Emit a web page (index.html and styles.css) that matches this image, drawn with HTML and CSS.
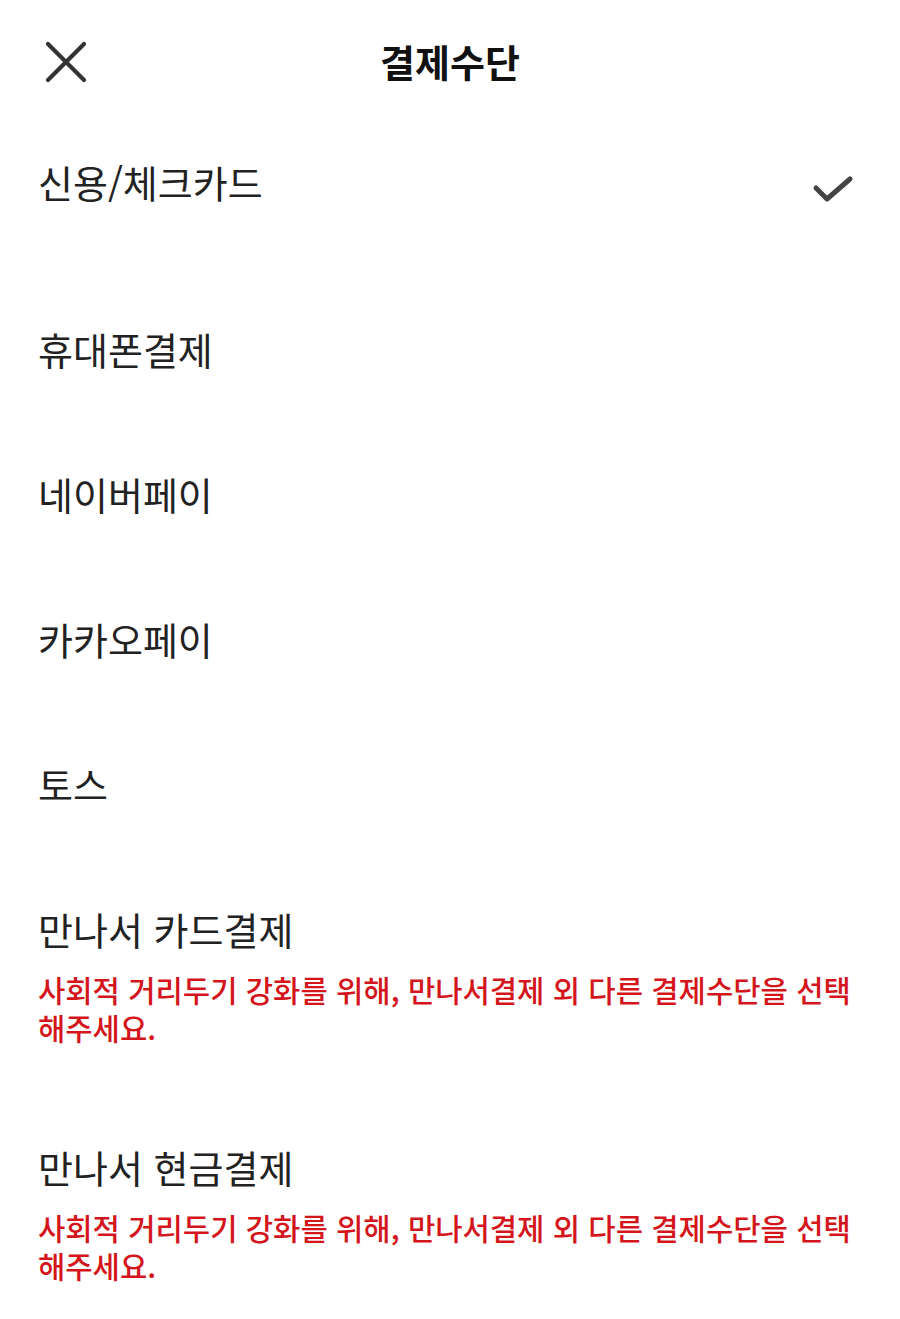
FILE: index.html
```html
<!DOCTYPE html>
<html lang="ko">
<head>
  <meta charset="UTF-8" />
  <meta name="viewport" content="width=device-width, initial-scale=1.0">
  <title>결제수단</title>
  <link rel="stylesheet" href="styles.css">
</head>
<body>
  <div class="sheet">
    <div class="header">
      <button class="close-btn" aria-label="닫기">
        <svg width="42" height="42" viewBox="0 0 42 42">
          <path d="M3 3 L39 39 M39 3 L3 39" stroke="#333" stroke-width="4.2" stroke-linecap="round" fill="none" />
        </svg>
      </button>
      <h1>결제수단</h1>
    </div>

    <ul class="options">
      <li class="option selected">
        <span class="label">신용/체크카드</span>
        <svg class="check" width="44" height="32" viewBox="0 0 44 32">
          <path d="M4 14 L15 25 L38 5" stroke="#444" stroke-width="5" stroke-linecap="round" stroke-linejoin="round" fill="none" />
        </svg>
      </li>
      <li class="option"><span class="label">휴대폰결제</span></li>
      <li class="option"><span class="label">네이버페이</span></li>
      <li class="option"><span class="label">카카오페이</span></li>
      <li class="option"><span class="label">토스</span></li>
      <li class="option disabled">
        <span class="label">만나서 카드결제</span>
        <p class="notice">사회적 거리두기 강화를 위해, 만나서결제 외 다른 결제수단을 선택해주세요.</p>
      </li>
      <li class="option disabled">
        <span class="label">만나서 현금결제</span>
        <p class="notice">사회적 거리두기 강화를 위해, 만나서결제 외 다른 결제수단을 선택해주세요.</p>
      </li>
    </ul>
  </div>
</body>
</html>
```

FILE: styles.css
```css
body {
  margin: 0;
  background: #fff;
  font-family: "Noto Sans CJK KR", "Noto Sans", sans-serif;
  color: #222;
}

.sheet {
  width: 900px;
}

.header {
  position: relative;
  height: 106px;
  padding-top: 38px;
  box-sizing: border-box;
  text-align: center;
}

.close-btn {
  position: absolute;
  left: 45px;
  top: 41px;
  padding: 0;
  border: none;
  background: none;
  cursor: pointer;
}

.header h1 {
  margin: 0;
  font-size: 38px;
  line-height: 46px;
  font-weight: 700;
  color: #111;
}

.options {
  list-style: none;
  margin: 0;
  padding: 0;
}

.option {
  display: flex;
  flex-wrap: wrap;
  align-items: center;
  justify-content: space-between;
  padding: 50px 38px;
}

.option.selected {
  padding-bottom: 70px;
}

.label {
  font-size: 38px;
  line-height: 45px;
  color: #222;
}

.check {
  margin-right: 6px;
  margin-top: 18px;
}

.notice {
  width: 100%;
  margin: 20px 0 0;
  font-size: 29.7px;
  line-height: 38px;
  font-weight: 500;
  color: #d4151b;
}

.option.disabled {
  padding-bottom: 47px;
}
```
